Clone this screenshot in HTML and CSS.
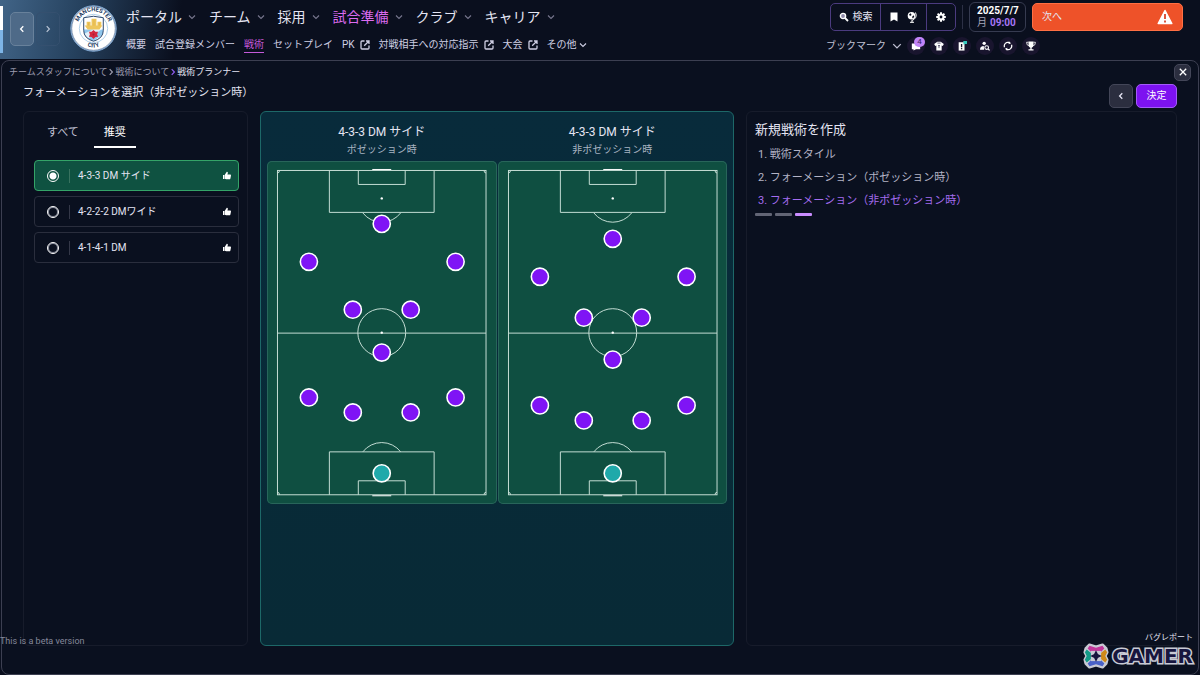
FILE: index.html
```html
<!DOCTYPE html>
<html lang="ja">
<head>
    <meta charset="UTF-8">
    <meta name="viewport" content="width=device-width, initial-scale=1.0">
    <title>戦術プランナー</title>
    <link rel="stylesheet" href="styles.css">
</head>
<body>

    <!-- shared shapes -->
    <svg class="defs" width="0" height="0" aria-hidden="true">
        <symbol id="down" viewBox="0 0 8 8"><path d="M1 2.5l3 3 3-3" fill="none" stroke="currentColor" stroke-width="1.1"/></symbol>
        <symbol id="left" viewBox="0 0 8 8"><path d="M5.3 1.2L2.6 4l2.7 2.8" fill="none" stroke="currentColor" stroke-width="1.3"/></symbol>
        <symbol id="right" viewBox="0 0 8 8"><path d="M2.7 1.2L5.4 4 2.7 6.8" fill="none" stroke="currentColor" stroke-width="1.2"/></symbol>
        <symbol id="external" viewBox="0 0 10 10"><path d="M4.5 1H2Q1 1 1 2v6q0 1 1 1h6q1 0 1-1V5.5M6 1h3v3M9 1L4.2 5.8" fill="none" stroke="currentColor" stroke-width="1.3"/></symbol>
        <symbol id="thumb" viewBox="0 0 10 10"><path d="M1 3.9h1.4v4H1zM2.8 3.7L4.8.8q1.4 0 1 1.4l-.4 1.3h2.8q.9.1.8 1l-.6 2.9q-.2.9-1.1.9H4.2l-1.4-.6z" fill="currentColor"/></symbol>
        <symbol id="pitch" viewBox="0 0 230 344">
            <g fill="none" stroke="#c4ddd4" stroke-width="1">
                <rect x="10.5" y="9.5" width="209" height="325"/>
                <path d="M10.5 172.5h209M62.5 9.5v42h105v-42M91.5 9.5v14h47v-14M62.5 334.5v-43h105v43M91.5 334.5v-14h47v14"/>
                <circle cx="115" cy="172" r="24"/>
                <path d="M96 52a24 24 0 0 0 38 0M96 291.5a24 24 0 0 1 38 0"/>
                <path d="M10.5 12q2 0 2-2.5M219.5 12q-2 0-2-2.5M10.5 332q2 0 2 2.5M219.5 332q-2 0-2 2.5"/>
            </g>
            <path d="M105.500 8.5h19M105.500 335.5h19" stroke="#fff" stroke-width="1"/>
            <g fill="#fff"><circle cx="115" cy="37.5" r="1.2"/><circle cx="115" cy="172" r="1.2"/></g>
        </symbol>
        <symbol id="player" viewBox="0 0 20 20"><circle cx="10" cy="10" r="8.6" fill="currentColor" stroke="#fff" stroke-width="1.6"/></symbol>
    </svg>

    <header class="topbar">
        <span class="club-colours"></span>
        <div class="history">
            <button aria-label="戻る" class="active"><svg class="i8"><use href="#left"/></svg></button>
            <button aria-label="進む"><svg class="i8"><use href="#right"/></svg></button>
        </div>
        <svg class="crest" viewBox="0 0 48 48" role="img" aria-label="Manchester City">
            <defs>
                <path id="arc-top" d="M8 27a16.5 16.5 0 1 1 32 0"/>
                <path id="arc-bottom" d="M9 34q15 19 30 0"/>
                <clipPath id="shield"><path d="M14 13q10-3 20 0v13q0 8-10 11-10-3-10-11z"/></clipPath>
            </defs>
            <circle cx="24" cy="24" r="23.2" fill="#fff" stroke="#7ba6d4" stroke-width="1"/>
            <circle cx="24" cy="24" r="22.3" fill="none" stroke="#294d7b" stroke-width=".6"/>
            <circle cx="24" cy="24" r="14.5" fill="#fff" stroke="#8dbbe2" stroke-width=".7"/>
            <g clip-path="url(#shield)">
                <rect x="13" y="11" width="22" height="14" fill="#fff"/>
                <rect x="13" y="25" width="22" height="14" fill="#8fc6ec"/>
                <path d="M13 30l15-7h7L16 36zM22 38l13-9v6l-8 5z" fill="#fff" opacity=".75"/>
                <path d="M15 21h18l-3 4H18zM17 17h4v4h-4zM22 14h5v7h-5zM28 17h4v4h-4z" fill="#eec65c"/>
                <path d="M19 18v3M24.500 15v6M30 18v3" stroke="#d9ab45" stroke-width=".6"/>
            </g>
            <path d="M14 13q10-3 20 0v13q0 8-10 11-10-3-10-11z" fill="none" stroke="#28456c" stroke-width="1"/>
            <path d="M24 25.500l2 1.800 2.600.1-.9 2.600 1 2.500-2.700.3-2 1.800-2-1.800-2.700-.3 1-2.500-.9-2.600 2.600-.1z" fill="#d3263f"/>
            <circle cx="24" cy="30.2" r="1" fill="#a81c34"/>
            <g class="crest-text">
                <text><textPath href="#arc-top" startOffset="50%">MANCHESTER</textPath></text>
                <text><textPath href="#arc-bottom" startOffset="50%">CITY</textPath></text>
            </g>
        </svg>

        <div class="menus">
            <nav class="main-nav">
                <a href="#">ポータル<svg class="i8"><use href="#down"/></svg></a>
                <a href="#">チーム<svg class="i8"><use href="#down"/></svg></a>
                <a href="#">採用<svg class="i8"><use href="#down"/></svg></a>
                <a href="#" class="current">試合準備<svg class="i8"><use href="#down"/></svg></a>
                <a href="#">クラブ<svg class="i8"><use href="#down"/></svg></a>
                <a href="#">キャリア<svg class="i8"><use href="#down"/></svg></a>
            </nav>
            <nav class="sub-nav">
                <a href="#">概要</a>
                <a href="#">試合登録メンバー</a>
                <a href="#" class="current">戦術</a>
                <a href="#">セットプレイ</a>
                <a href="#">PK<svg class="i10"><use href="#external"/></svg></a>
                <a href="#">対戦相手への対応指示<svg class="i10"><use href="#external"/></svg></a>
                <a href="#">大会<svg class="i10"><use href="#external"/></svg></a>
                <a href="#" class="more">その他<svg class="i8"><use href="#down"/></svg></a>
            </nav>
        </div>

        <div class="tools">
            <div class="tool-row">
                <div class="tool-group">
                    <button class="search"><svg class="i10" viewBox="0 0 10 10"><circle cx="4" cy="4" r="2.6" fill="#8e8aa8" stroke="#fff" stroke-width="1.4"/><path d="M6 6l3 3" stroke="#fff" stroke-width="1.8"/></svg>検索</button>
                    <div class="pair">
                        <button aria-label="ブックマーク"><svg class="i10" viewBox="0 0 10 10"><path d="M1.500.5h7v9L5 7.500 1.500 9.500z" fill="#fff"/></svg></button>
                        <button aria-label="ワールド"><svg class="i12" viewBox="0 0 12 12"><circle cx="5.5" cy="4.800" r="3.800" fill="#fff"/><path d="M3 3.500l1.600-1.200 1 1.600-1.600 1zM6 6l1.500-1.800.8 1.500L6.800 7.500z" fill="#0b1020"/><path d="M9.500 1.500q2.500 5.500-4 8.300M4 11.300h4M6 9.500v2" fill="none" stroke="#fff"/></svg></button>
                    </div>
                    <button aria-label="設定" class="gear"><svg class="i10" viewBox="0 0 10 10"><path d="M5 .2v9.600M.2 5h9.600M1.600 1.600l6.800 6.800M8.400 1.600L1.600 8.400" stroke="#fff" stroke-width="2"/><circle cx="5" cy="5" r="3.5" fill="#fff"/><circle cx="5" cy="5" r="1.4" fill="#0b1020"/></svg></button>
                </div>
                <span class="rule"></span>
                <div class="clock">
                    <strong>2025/7/7</strong>
                    <span>月</span><time>09:00</time>
                </div>
                <button class="next">次へ<svg viewBox="0 0 16 16"><path d="M8 1.500L14.800 14.500H1.200z" fill="#fff" stroke="#fff" stroke-width="1.5" stroke-linejoin="round"/><path d="M8 5v5M8 11.500v2" stroke="#d8432a" stroke-width="1.8"/></svg></button>
            </div>
            <div class="bookmarks">
                <button class="bookmark-menu">ブックマーク<svg class="i10"><use href="#down"/></svg></button>
                <a href="#" aria-label="メッセージ"><svg class="i10" viewBox="0 0 12 12"><path d="M1 3h10v7H6l-3 1.500V10H1z" fill="#fff"/></svg><span class="badge">4</span></a>
                <a href="#" aria-label="スカッド"><svg class="i10" viewBox="0 0 12 12"><path d="M4 1h4l3.800 2.500L10.500 6 9.200 5.500V11.500H2.800V5.500L1.500 6 .2 3.500z" fill="#fff"/><path d="M4 2.500h4M4.800 5.500h2.400M6 5.500v3" stroke="#45405e"/></svg></a>
                <a href="#" aria-label="戦術"><svg class="i10" viewBox="0 0 12 12"><path d="M2 1.500h7V11.500H2z" fill="#fff"/><path d="M5.500 3.500v4M5.500 8.500v1.500" stroke="#17152b" stroke-width="1.6"/><path d="M7.500 0H12v3.500H9.500L8 4.500z" fill="#36c8be"/></svg></a>
                <a href="#" aria-label="スカウト"><svg class="i10" viewBox="0 0 12 12"><circle cx="5" cy="2.800" r="2" fill="#fff"/><path d="M0 10.500q0-4.500 4.500-4.500l.5 4.500z" fill="#fff"/><circle cx="8" cy="7.800" r="2.200" fill="none" stroke="#fff" stroke-width="1.3"/><path d="M9.500 9.300l2 2" stroke="#fff" stroke-width="1.5"/></svg></a>
                <a href="#" aria-label="移籍"><svg class="i10" viewBox="0 0 12 12"><path d="M1.800 7.500A4.400 4.400 0 0 1 7.500 1.900M10.200 4.500A4.400 4.400 0 0 1 4.500 10.100" fill="none" stroke="#fff" stroke-width="1.5"/><path d="M7 .3L9.700 2.800 6.800 4zM5 11.700L2.300 9.200l2.900-1.200z" fill="#fff"/></svg></a>
                <a href="#" aria-label="大会"><svg class="i10" viewBox="0 0 12 12"><path d="M3 .5h6v4q0 3-2.200 3.500V10H9v1.500H3V10h2.200V8Q3 7.500 3 4.500z" fill="#fff"/><path d="M3 1.500H.7q0 4 2.800 4.200M9 1.500h2.300q0 4-2.800 4.200" fill="none" stroke="#fff"/></svg></a>
            </div>
        </div>
    </header>

    <main class="window">
        <div class="crumb-row">
            <nav class="crumbs">
                <a href="#">チームスタッフについて</a><svg class="i8"><use href="#right"/></svg>
                <a href="#">戦術について</a><svg class="i8 lit"><use href="#right"/></svg>
                <a href="#" class="here">戦術プランナー</a>
            </nav>
            <button class="close" aria-label="閉じる"><svg class="i8" viewBox="0 0 8 8"><path d="M.8.8l6.400 6.400M7.200.8L.8 7.200" stroke="#fff" stroke-width="1.3"/></svg></button>
        </div>
        <div class="title-row">
            <h1>フォーメーションを選択（非ポゼッション時）</h1>
            <button class="back" aria-label="前へ"><svg class="i8"><use href="#left"/></svg></button>
            <button class="confirm">決定</button>
        </div>

        <div class="columns">
            <section class="panel choices">
                <div class="tabs">
                    <button>すべて</button>
                    <button class="selected">推奨</button>
                </div>
                <label class="choice"><input type="radio" name="formation" checked><span>4-3-3 DM サイド</span><svg class="i10"><use href="#thumb"/></svg></label>
                <label class="choice"><input type="radio" name="formation"><span>4-2-2-2 DMワイド</span><svg class="i10"><use href="#thumb"/></svg></label>
                <label class="choice"><input type="radio" name="formation"><span>4-1-4-1 DM</span><svg class="i10"><use href="#thumb"/></svg></label>
            </section>

            <section class="panel preview">
                <div class="shape">
                    <h2>4-3-3 DM サイド</h2>
                    <p>ポゼッション時</p>
                    <svg class="field" viewBox="0 0 230 344">
                        <use href="#pitch" width="230" height="344"/>
                        <g class="team">
                            <use href="#player" x="105" y="53" width="20" height="20"/>
                            <use href="#player" x="32" y="91" width="20" height="20"/>
                            <use href="#player" x="179" y="91" width="20" height="20"/>
                            <use href="#player" x="76" y="139" width="20" height="20"/>
                            <use href="#player" x="134" y="139" width="20" height="20"/>
                            <use href="#player" x="105" y="182" width="20" height="20"/>
                            <use href="#player" x="32" y="227" width="20" height="20"/>
                            <use href="#player" x="179" y="227" width="20" height="20"/>
                            <use href="#player" x="76" y="242" width="20" height="20"/>
                            <use href="#player" x="134" y="242" width="20" height="20"/>
                            <use class="keeper" href="#player" x="105" y="303" width="20" height="20"/>
                        </g>
                    </svg>
                </div>
                <div class="shape">
                    <h2>4-3-3 DM サイド</h2>
                    <p>非ポゼッション時</p>
                    <svg class="field" viewBox="0 0 230 344">
                        <use href="#pitch" width="230" height="344"/>
                        <g class="team">
                            <use href="#player" x="105" y="68" width="20" height="20"/>
                            <use href="#player" x="32" y="106" width="20" height="20"/>
                            <use href="#player" x="179" y="106" width="20" height="20"/>
                            <use href="#player" x="76" y="147" width="20" height="20"/>
                            <use href="#player" x="134" y="147" width="20" height="20"/>
                            <use href="#player" x="105" y="189" width="20" height="20"/>
                            <use href="#player" x="32" y="235" width="20" height="20"/>
                            <use href="#player" x="179" y="235" width="20" height="20"/>
                            <use href="#player" x="76" y="250" width="20" height="20"/>
                            <use href="#player" x="134" y="250" width="20" height="20"/>
                            <use class="keeper" href="#player" x="105" y="303" width="20" height="20"/>
                        </g>
                    </svg>
                </div>
            </section>

            <section class="panel steps">
                <h2>新規戦術を作成</h2>
                <ol>
                    <li>1. 戦術スタイル</li>
                    <li>2. フォーメーション（ポゼッション時）</li>
                    <li class="now">3. フォーメーション（非ポゼッション時）</li>
                </ol>
                <div class="progress"><span></span><span></span><span class="now"></span></div>
            </section>
        </div>
    </main>

    <span class="beta">This is a beta version</span>
    <div class="corner">
        <a href="#">バグレポート</a>
        <div class="gamer">
            <svg viewBox="0 0 28 28" aria-hidden="true">
                <path d="M7 2l7 2 7-2 4 4 1 4-2 4 2 4-1 4-4 4-7-2-7 2-4-4-1-4 2-4-2-4 1-4z" fill="#c8cad4" stroke="#c8cad4" stroke-width="3" stroke-linejoin="round"/>
                <path d="M7 3l7 2 7-2 2 3-4 4H9L5 6z" fill="#c2379b"/>
                <path d="M24 7l2 3-2 4 2 4-2 3-5-4v-6z" fill="#d08a18"/>
                <path d="M7 25l7-2 7 2 2-3-4-4H9l-4 4z" fill="#4a62c8"/>
                <path d="M4 7l-2 3 2 4-2 4 2 3 5-4v-6z" fill="#139a86"/>
                <rect x="9.5" y="9.5" width="9" height="9" fill="#c8cad4" stroke="#c8cad4" stroke-width="2"/>
                <path d="M14 9.500l1.500 3 3 1.500-3 1.500-1.500 3-1.500-3-3-1.500 3-1.500z" fill="#17163f" stroke="#17163f" stroke-width="1.5"/>
            </svg>
            <span>GAMER</span>
        </div>
    </div>

</body>
</html>
```

FILE: styles.css
```css
* {
    box-sizing: border-box;
}
body {
    margin: 0;
    height: 100vh;
    display: flex;
    flex-direction: column;
    position: relative;
    overflow: hidden;
    background-color: #0a0f1e;
    color: #e4e4f2;
    font-family: Roboto, "Noto Sans CJK JP", sans-serif;
    font-size: 10px;
    line-height: 14px;
}
a {
    color: inherit;
    text-decoration: none;
}
button {
    display: flex;
    align-items: center;
    justify-content: center;
    padding: 0;
    border: none;
    background: none;
    color: inherit;
    font: inherit;
    cursor: pointer;
}
h1, h2, p, ol {
    margin: 0;
    padding: 0;
    font-weight: 400;
}
svg {
    flex: none;
}
.defs {
    position: absolute;
}
.i8 {
    width: 8px;
    height: 8px;
}
.i10 {
    width: 10px;
    height: 10px;
}
.i12 {
    width: 12px;
    height: 12px;
}

/* Top bar */
.topbar {
    display: flex;
    height: 59px;
    padding-right: 17px;
    background: linear-gradient(100deg, #416487 0, #26425f 80px, #0a0f1e 180px);
}
.club-colours {
    width: 3px;
    height: 47px;
    margin-top: 6px;
    background: linear-gradient(#fff 50%, #7db4e6 50%);
}
.history {
    display: flex;
    gap: 2px;
    margin: 12px 10px 13px 7px;
}
.history button {
    width: 24px;
    border: 1px solid #35506f;
    border-radius: 5px;
    color: #b9c4d4;
}
.history .active {
    background-color: #4e6a88;
    border-color: #68819b;
    color: #fff;
}
.crest {
    width: 47px;
    height: 47px;
    margin-top: 5px;
}
.crest-text {
    fill: #22395e;
    font-size: 6px;
    font-weight: 700;
    text-anchor: middle;
}
.menus {
    flex: 1;
    padding: 7px 0 0 9px;
    white-space: nowrap;
}
.main-nav, .sub-nav {
    display: flex;
}
.main-nav {
    gap: 13px;
    height: 20px;
    font-size: 14px;
    line-height: 20px;
}
.main-nav a {
    display: flex;
    align-items: center;
    gap: 6px;
}
.main-nav svg {
    color: #77768e;
}
.main-nav .current {
    color: #dd6bf0;
}
.sub-nav {
    gap: 9px;
    margin-top: 10px;
    color: #cfcfe4;
}
.sub-nav a {
    display: flex;
    align-items: center;
    gap: 5px;
    height: 16px;
}
.sub-nav .current {
    color: #c45ada;
    border-bottom: 1px solid #c45ada;
}
.sub-nav .more {
    gap: 2px;
}

/* Tools on the right */
.tool-row {
    display: flex;
    align-items: center;
    gap: 6px;
    padding-top: 2px;
}
.tool-group {
    display: flex;
    height: 28px;
    border: 1px solid #4b3b7f;
    border-radius: 5px;
}
.search {
    width: 49px;
    gap: 4px;
}
.pair {
    display: flex;
    width: 47px;
    justify-content: space-evenly;
    border: solid #4b3b7f;
    border-width: 0 1px;
}
.gear {
    width: 28px;
}
.rule {
    width: 1px;
    height: 24px;
    background-color: #2c3045;
}
.clock {
    display: grid;
    grid-template-columns: auto auto;
    justify-content: space-between;
    align-content: center;
    width: 57px;
    height: 30px;
    padding: 0 7px;
    border: 1px solid #363b50;
    border-radius: 6px;
    line-height: 12px;
}
.clock strong {
    grid-column: span 2;
    color: #fff;
}
.clock span {
    color: #a7a7bb;
}
.clock time {
    color: #a675f5;
    font-weight: 700;
}
.next {
    width: 151px;
    height: 28px;
    padding: 0 9px;
    justify-content: space-between;
    border: 1px solid #ff6f43;
    border-radius: 5px;
    background-color: #ee5229;
}
.next svg {
    width: 16px;
    height: 16px;
}
.bookmarks {
    display: flex;
    align-items: center;
    gap: 5px;
    margin-top: 5px;
    color: #c0c0d3;
}
.bookmark-menu {
    gap: 6px;
    width: 76px;
    margin-left: -4px;
}
.bookmarks a {
    position: relative;
    display: grid;
    place-items: center;
    width: 18px;
    height: 18px;
    border-radius: 50%;
    background-color: #19152e;
}
.badge {
    position: absolute;
    top: 0;
    right: 0;
    width: 11px;
    height: 10px;
    border-radius: 5px;
    background-color: #c184f8;
    color: #34205a;
    font-size: 8px;
    line-height: 10px;
    text-align: center;
}

/* Window */
.window {
    flex: 1;
    display: flex;
    flex-direction: column;
    margin: 1px 1px 0;
    padding-bottom: 28px;
    border: 1px solid #3c3f51;
    border-radius: 8px;
    background-color: #0a101f;
}
.crumb-row {
    display: flex;
    align-items: center;
    justify-content: space-between;
    height: 22px;
    padding: 0 7px;
}
.crumbs {
    display: flex;
    align-items: center;
    color: #9c9caf;
    font-size: 9px;
}
.crumbs .lit {
    color: #8f5cf0;
}
.crumbs .here {
    color: #e4e4f2;
}
.close, .back {
    border: 1px solid #434658;
    border-radius: 5px;
    background-color: #2b2e3f;
}
.close {
    width: 17px;
    height: 17px;
}
.title-row {
    display: flex;
    align-items: flex-start;
    gap: 3px;
    height: 28px;
    padding: 0 21px;
}
.title-row h1 {
    flex: 1;
    font-size: 11px;
    line-height: 20px;
}
.back, .confirm {
    height: 24px;
    margin-top: 1px;
}
.back {
    width: 24px;
}
.confirm {
    width: 41px;
    border: 1px solid #a45cf8;
    border-radius: 5px;
    background-color: #7d12f0;
    color: #fff;
}
.columns {
    flex: 1;
    display: grid;
    grid-template-columns: 225fr 474fr 431fr;
    gap: 12px;
    padding: 0 21px;
}
.panel {
    border: 1px solid #171c2b;
    border-radius: 6px;
}

/* Formation list */
.choices {
    display: flex;
    flex-direction: column;
    gap: 5px;
    padding: 8px 8px 8px 10px;
}
.tabs {
    display: flex;
    gap: 5px;
    margin-bottom: 7px;
    padding-left: 3px;
}
.tabs button {
    height: 28px;
    padding: 0 10px;
    border-bottom: 2px solid transparent;
    color: #c0c0d3;
    font-size: 11px;
}
.tabs .selected {
    border-color: #fff;
    color: #fff;
}
.choice {
    display: flex;
    align-items: center;
    height: 31px;
    padding: 0 6px 0 12px;
    border: 1px solid #2a2e3d;
    border-radius: 4px;
    cursor: pointer;
}
.choice span {
    flex: 1;
    margin-left: 10px;
    padding-left: 8px;
    border-left: 1px solid #343848;
}
.choice svg {
    color: #fff;
}
.choice input {
    appearance: none;
    width: 12px;
    height: 12px;
    margin: 0;
    border: 1px solid #fff;
    border-radius: 50%;
    box-shadow: inset 0 0 0 1px #8c90a0;
}
.choice input:checked {
    background: radial-gradient(circle, #fff 3px, transparent 4px);
    box-shadow: none;
}
.choice:has(input:checked) {
    background-color: #0f5241;
    border-color: #34a468;
}
.choice:has(input:checked) span {
    border-color: #39725f;
}

/* Pitches */
.preview {
    display: flex;
    align-items: flex-start;
    gap: 1px;
    padding: 12px 6px;
    background: linear-gradient(#082b3b, #082a36);
    border-color: #1d6868;
}
.shape {
    flex: 1;
    text-align: center;
}
.shape h2 {
    font-size: 12px;
    line-height: 16px;
}
.shape p {
    margin: 3px 0 4px;
    color: #a8b4c2;
}
.field {
    display: block;
    width: 100%;
    border-radius: 5px;
    background-color: #0f4f41;
    box-shadow: inset 0 0 0 1px #28655a;
}
.team {
    color: #7f14f5;
}
.keeper {
    color: #1fa9aa;
}

/* Steps */
.steps {
    padding: 9px 8px;
}
.steps h2 {
    margin-bottom: 4px;
    font-size: 13px;
    line-height: 18px;
}
.steps ol {
    padding-left: 3px;
    list-style: none;
    color: #b4b4c6;
    font-size: 11px;
    line-height: 23px;
}
.steps li.now {
    color: #a56df0;
}
.progress {
    display: flex;
    gap: 3px;
    margin-top: 1px;
}
.progress span {
    width: 17px;
    height: 3px;
    border-radius: 1px;
    background-color: #626575;
}
.progress .now {
    background-color: #c98cff;
}

/* Overlays on the bottom corners */
.beta {
    position: absolute;
    left: 0;
    bottom: 27px;
    color: #85889a;
    font-size: 9px;
}
.corner {
    position: absolute;
    right: 7px;
    bottom: 6px;
    display: flex;
    flex-direction: column;
    align-items: flex-end;
    font-size: 8px;
    line-height: 10px;
}
.gamer {
    display: flex;
    align-items: center;
    gap: 3px;
    height: 26px;
    color: #17163f;
    font-family: "DejaVu Sans", sans-serif;
    font-size: 20px;
    font-weight: 700;
    line-height: 24px;
}
.gamer svg {
    width: 26px;
    height: 26px;
}
.gamer span {
    -webkit-text-stroke: 3px #c8cad4;
    paint-order: stroke fill;
}
```
